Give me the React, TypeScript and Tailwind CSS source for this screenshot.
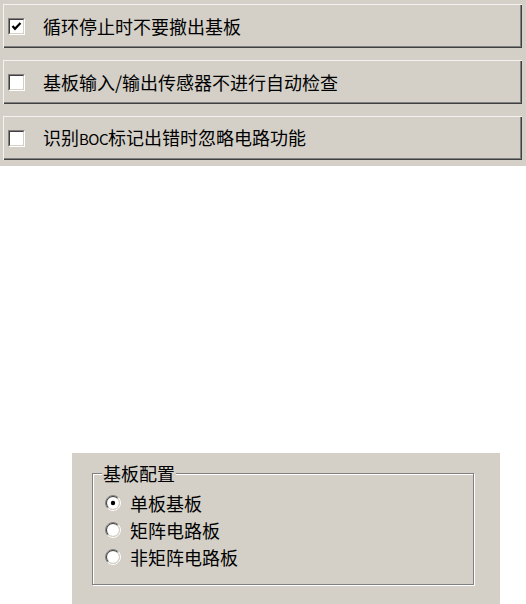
const FACE = "bg-[#d4d0c8]";

const options = [
  { label: <>循环停止时不要撤出基板</>, key: "a", checked: true },
  { label: <>基板输入/输出传感器不进行自动检查</>, key: "b", checked: false },
  {
    label: (
      <>
        识别<span className="text-[15px] tracking-[-0.5px]">BOC</span>标记出错时忽略电路功能
      </>
    ),
    key: "c",
    checked: false,
  },
];

const boardTypes = ["单板基板", "矩阵电路板", "非矩阵电路板"];

function CheckBox({ checked }: { checked: boolean }) {
  return (
    <span className="flex h-[17px] w-[17px] shrink-0 border-t border-l border-b border-r border-t-[#808080] border-l-[#808080] border-b-white border-r-white">
      <span className="flex flex-1 items-center justify-center border-t border-l border-b border-r border-t-[#404040] border-l-[#404040] border-b-[#d4d0c8] border-r-[#d4d0c8] bg-white">
        {checked && (
          <svg width="11" height="11" viewBox="0 0 11 11">
            <path d="M1.5 5 L4 7.8 L9.5 2" fill="none" stroke="#000" strokeWidth="2.2" />
          </svg>
        )}
      </span>
    </span>
  );
}

function Radio({ checked }: { checked: boolean }) {
  const arc = (r: number, a: boolean) => {
    const d = r * Math.SQRT1_2;
    const bl = `${8 - d} ${8 + d}`;
    const tr = `${8 + d} ${8 - d}`;
    return a ? `M${bl} A${r} ${r} 0 0 1 ${tr}` : `M${tr} A${r} ${r} 0 0 1 ${bl}`;
  };
  return (
    <svg width="16" height="16" viewBox="0 0 16 16" className="shrink-0">
      <circle cx="8" cy="8" r="6" fill="#fff" />
      <path d={arc(7.5, true)} fill="none" stroke="#808080" />
      <path d={arc(7.5, false)} fill="none" stroke="#fff" />
      <path d={arc(6.5, true)} fill="none" stroke="#404040" />
      <path d={arc(6.5, false)} fill="none" stroke="#d4d0c8" />
      {checked && <circle cx="8" cy="8" r="2.2" fill="#000" />}
    </svg>
  );
}

export default function App() {
  return (
    <div
      className="flex h-[604px] w-[526px] flex-col bg-white text-[18px] text-black"
      style={{ fontFamily: '"Noto Sans CJK SC", "Noto Sans", sans-serif' }}
    >
      {/* option buttons */}
      <div className={`flex h-[166px] flex-col gap-[12px] pt-[4px] pl-[3px] pr-[4px] ${FACE}`}>
        {options.map((o) => (
          <div
            key={o.key}
            className={`flex h-[44px] items-center gap-[18px] pl-[5px] ${FACE} shadow-[inset_1px_1px_0_#f4f3f0,inset_-1px_-1px_0_#404040,inset_-2px_-2px_0_#808080]`}
          >
            <CheckBox checked={o.checked} />
            <span className="leading-[24px]">{o.label}</span>
          </div>
        ))}
      </div>

      <div className="flex-1" />

      {/* board config panel */}
      <div className={`ml-[72px] h-[151px] w-[428px] pt-[20px] pl-[20px] ${FACE}`}>
        <div className="relative h-[112px] w-[382px] border border-[#808080] shadow-[1px_1px_0_#fff,inset_1px_1px_0_#fff]">
          <span className={`absolute left-[9px] top-[-13px] px-px leading-[24px] ${FACE}`}>基板配置</span>
          <div className="flex flex-col pt-[15px] pl-[12px]">
            {boardTypes.map((t, i) => (
              <div key={t} className="flex h-[27px] items-center gap-[9px]">
                <Radio checked={i === 0} />
                <span className="leading-[24px]">{t}</span>
              </div>
            ))}
          </div>
        </div>
      </div>
    </div>
  );
}
